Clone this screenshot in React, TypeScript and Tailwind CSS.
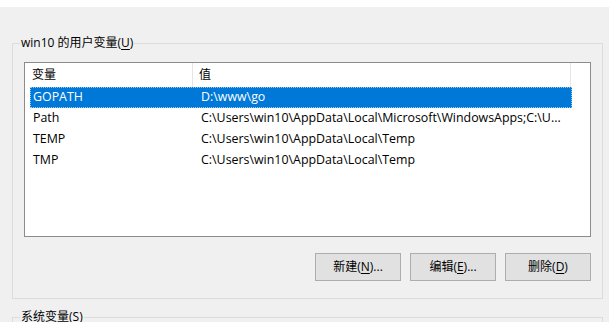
import React from "react";

const font = { fontFamily: '"Open Sans", "Noto Sans CJK SC", sans-serif' };

function U({ c }: { c: string }) {
  return <span className="underline underline-offset-2">{c}</span>;
}

const rows = [
  { n: "Path", v: "C:\\Users\\win10\\AppData\\Local\\Microsoft\\WindowsApps;C:\\U..." },
  { n: "TEMP", v: "C:\\Users\\win10\\AppData\\Local\\Temp" },
  { n: "TMP", v: "C:\\Users\\win10\\AppData\\Local\\Temp" },
];

function Btn({ children }: { children: React.ReactNode }) {
  return (
    <div className="w-[86px] h-[28px] border border-[#adadad] bg-[#e1e1e1] flex items-center justify-center text-[12px] text-black">
      {children}
    </div>
  );
}

export default function App() {
  return (
    <div className="w-[609px] h-[322px] bg-[#f0f0f0] overflow-hidden text-[12px] text-black leading-none" style={font}>
      <div className="h-[7px] bg-white" />
      <div className="pl-[12px] pt-[36px]">
        <div className="relative w-[591px] h-[256px] border border-[#dcdcdc]">
          <div className="absolute left-[7px] -top-[9px] px-[1px] bg-[#f0f0f0] leading-[16px]">
            win10 的用户变量(<U c="U" />)
          </div>
          <div className="ml-[11px] mt-[18px] w-[567px] h-[175px] border border-[#8c8c8c] bg-white">
            <div className="flex h-[24px] items-center">
              <div className="w-[168px] h-full pl-[7px] flex items-center border-r border-[#e5e5e5]">变量</div>
              <div className="w-[378px] h-full pl-[6px] flex items-center border-r border-[#e5e5e5]">值</div>
            </div>
            <div className="ml-[5px] w-[542px] h-[21px] flex items-center bg-[#0078d7] text-white text-[12.4px] outline-1 outline-dotted outline-[#99c9ef] -outline-offset-1">
              <div className="w-[164px] pl-[3px]">GOPATH</div>
              <div className="pl-[7px]">D:\www\go</div>
            </div>
            {rows.map((r) => (
              <div key={r.n} className="ml-[5px] w-[542px] h-[21px] flex items-center text-[12.4px]">
                <div className="w-[164px] pl-[3px]">{r.n}</div>
                <div className="pl-[7px] whitespace-nowrap">{r.v}</div>
              </div>
            ))}
          </div>
          <div className="mt-[16px] pr-[11px] flex justify-end gap-[9px]">
            <Btn>新建(<U c="N" />)...</Btn>
            <Btn>编辑(<U c="E" />)...</Btn>
            <Btn>删除(<U c="D" />)</Btn>
          </div>
        </div>
        <div className="relative mt-[18px] w-[591px] h-[40px] border border-[#dcdcdc]">
          <div className="absolute left-[7px] -top-[9px] px-[1px] bg-[#f0f0f0] leading-[16px]">
            系统变量(<U c="S" />)
          </div>
        </div>
      </div>
    </div>
  );
}
